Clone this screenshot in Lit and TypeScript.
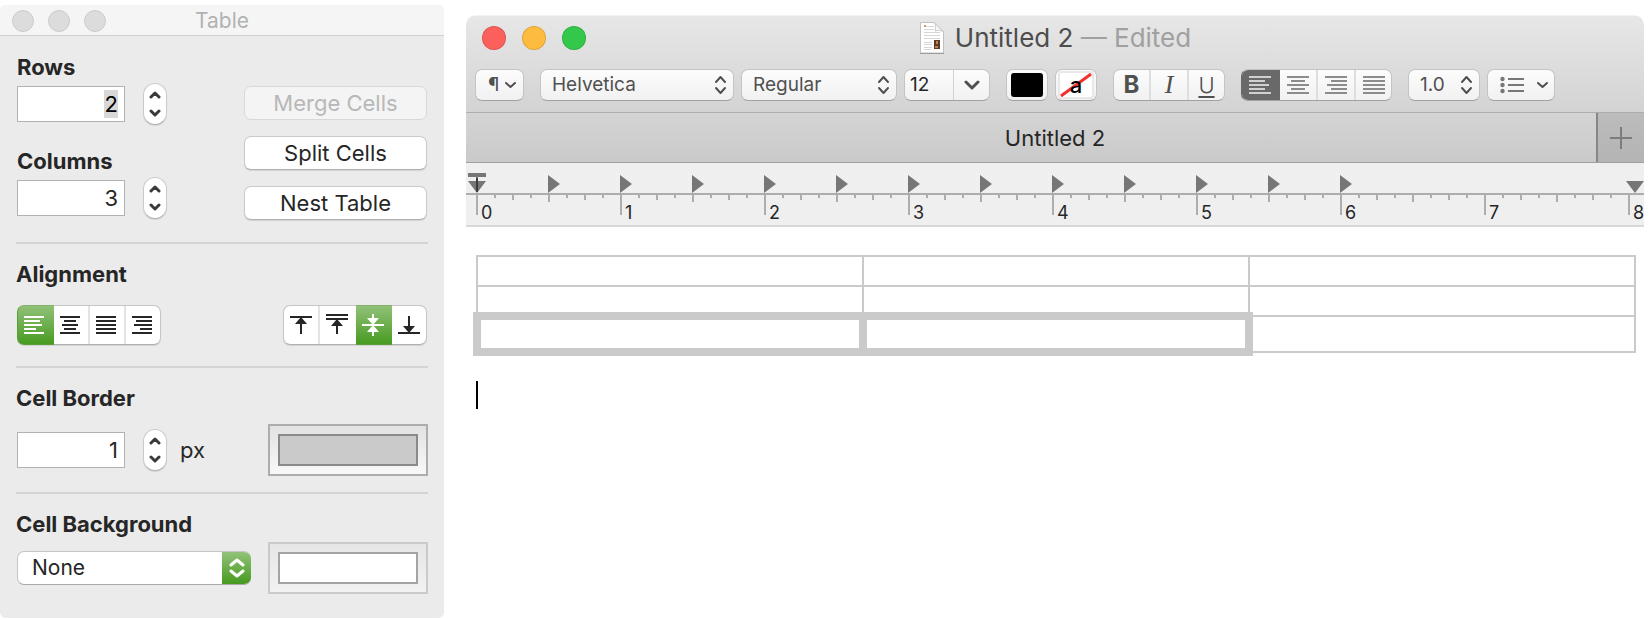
import { LitElement, html, css, svg } from "lit";
import { customElement, property } from "lit/decorators.js";

type Bar = [x: number, width: number];

/** Five stacked two-pixel bars, as used by every text alignment icon. */
const bars = (width: number, rows: Bar[]) => html`
  <svg width=${width} height="18" viewBox="0 0 ${width} 18" fill="currentColor" aria-hidden="true">
    ${rows.map(([x, w], i) => svg`<rect x=${x} y=${i * 4} width=${w} height="2"></rect>`)}
  </svg>
`;

const upDown = (size: number, stroke: number) => html`
  <svg class="updown" width=${size} height="20" viewBox="0 0 ${size} 20" fill="none"
    stroke="currentColor" stroke-width=${stroke} stroke-linecap="round" stroke-linejoin="round" aria-hidden="true">
    <path d="M2 7 L${size / 2} 2 L${size - 2} 7 M2 13 L${size / 2} 18 L${size - 2} 13"></path>
  </svg>
`;

const chevron = (up: boolean, width = 12, stroke = 3) => html`
  <svg width=${width} height="8" viewBox="0 0 ${width} 8" fill="none" stroke="currentColor"
    stroke-width=${stroke} stroke-linecap="round" stroke-linejoin="round" aria-hidden="true">
    <path d=${up ? `M2 6 L${width / 2} 2 L${width - 2} 6` : `M2 2 L${width / 2} 6 L${width - 2} 2`}></path>
  </svg>
`;

const base = css`
  * { box-sizing: border-box; }
  :host {
    font-family: Inter, "Liberation Sans", sans-serif;
    font-size: 22px;
    line-height: 24px;
    color: #262626;
  }
  button, input, select {
    font: inherit;
    color: inherit;
    margin: 0;
    padding: 0;
    border: 0;
    background: none;
    appearance: none;
    outline-offset: 1px;
  }
  svg { display: block; flex: none; }
`;

@customElement("number-stepper")
class NumberStepper extends LitElement {
  @property() label = "";
  @property({ type: Number }) value = 0;
  @property({ type: Boolean }) marked = false;

  static styles = [base, css`
    :host { display: flex; align-items: center; gap: 18px; }
    input {
      width: 108px;
      height: 36px;
      padding: 0 6px;
      text-align: right;
      background: #fff;
      border: 1px solid #b2b2b2;
      line-height: 28px;
    }
    .marked {
      color: #000;
      background: linear-gradient(#d8d8d8, #d8d8d8) right 6px center / 14px 28px no-repeat #fff;
    }
    .step {
      display: flex;
      flex-direction: column;
      width: 24px;
      height: 42px;
      border: 1px solid #cbcbcb;
      border-bottom-color: #b0b0b0;
      border-radius: 12px;
      background: #fff;
      box-shadow: 0 1px 1px #0000001a;
      color: #3a3a3a;
    }
    .step button { flex: 1; display: flex; justify-content: center; }
    .up { align-items: flex-end; padding-bottom: 5px; }
    .down { align-items: flex-start; padding-top: 5px; }
  `];

  private change(by: number) {
    this.value = Math.max(1, this.value + by);
  }

  render() {
    return html`
      <input type="text" inputmode="numeric" aria-label=${this.label}
        class=${this.marked ? "marked" : ""} .value=${String(this.value)} />
      <div class="step">
        <button class="up" aria-label="Increase" @click=${() => this.change(1)}>${chevron(true)}</button>
        <button class="down" aria-label="Decrease" @click=${() => this.change(-1)}>${chevron(false)}</button>
      </div>
    `;
  }
}

@customElement("table-panel")
class TablePanel extends LitElement {
  static styles = [base, css`
    :host {
      display: block;
      background: #ebebeb;
      border-radius: 6px;
      overflow: hidden;
    }
    header {
      display: grid;
      grid-template-columns: 1fr auto 1fr;
      align-items: center;
      height: 31px;
      padding: 1px 12px 0;
      background: #f5f5f5;
      border-bottom: 1px solid #d0d0d0;
      color: #b2b2b2;
    }
    .lights { display: flex; gap: 14px; }
    .light {
      width: 22px;
      height: 22px;
      border-radius: 50%;
      background: #dcdcdc;
      border: 1px solid #cbcbcb;
    }
    h1, h2 { margin: 0; font-size: 22px; line-height: 24px; }
    h1 { font-size: 21px; font-weight: 400; }
    h2 { font-weight: 700; }
    .body { padding: 1px 16px 8px; }
    section {
      display: flex;
      flex-direction: column;
      padding: 18px 0 16px;
      border-bottom: 2px solid #d4d4d4;
    }
    section:last-child { border-bottom: 0; }
    .row, .dims { padding-left: 1px; }
    .dims { display: flex; justify-content: space-between; align-items: flex-end; padding-bottom: 6px; }
    .fields { display: flex; flex-direction: column; gap: 24px; padding-bottom: 1px; }
    .field { display: flex; flex-direction: column; gap: 4px; }
    .actions { display: flex; flex-direction: column; gap: 16px; padding-right: 1px; }
    .push {
      width: 183px;
      height: 34px;
      border-radius: 7px;
      border: 1px solid #cacaca;
      border-bottom-color: #b0b0b0;
      background: #fff;
      box-shadow: 0 1px 1px #0000001a;
    }
    .push:disabled { background: #f4f4f4; color: #b8b8b8; border-color: #d8d8d8; box-shadow: none; }
    .row { display: flex; align-items: center; justify-content: space-between; }
    .aligns { padding: 19px 1px 5px; }
    .border { padding-top: 14px; }
    .background { padding-top: 6px; }
    .unit { display: flex; align-items: center; gap: 13px; }
    .seg {
      display: grid;
      grid-template-columns: 37px 36px 36px 35px;
      height: 40px;
      border-radius: 7px;
      box-shadow: 0 1px 1px #0000001a;
    }
    .seg button {
      display: flex;
      align-items: center;
      padding-left: 6px;
      background: #fff;
      border: solid #c6c6c6;
      border-width: 1px 0;
      border-bottom-color: #b0b0b0;
      background-clip: padding-box;
      box-shadow: inset -2px 0 #e4e4e4;
    }
    .seg button:first-child { border-left-width: 1px; border-radius: 7px 0 0 7px; }
    .seg button:last-child { border-right-width: 1px; border-radius: 0 7px 7px 0; box-shadow: none; }
    .seg button[aria-pressed="true"] {
      color: #fff;
      background: linear-gradient(#93c27a, #459a1f) border-box;
      border-color: #5a9e3a;
      border-top-color: #86b36c;
      box-shadow: none;
    }
    .seg button:has(+ [aria-pressed="true"]) { box-shadow: none; }
    .well {
      display: flex;
      width: 160px;
      height: 52px;
      padding: 8px;
      border: 2px solid #adadad;
      background: linear-gradient(#e2e2e2, #f8f8f8);
    }
    .swatch { flex: 1; border: 2px solid #8a8a8a; background: #cacaca; }
    .pale { border-color: #cacaca; background: linear-gradient(#e6e6e6, #f2f2f2); }
    .pale .swatch { border-color: #a4a4a4; background: #fff; }
    .popup {
      display: grid;
      grid-template-columns: 1fr 29px;
      width: 234px;
      height: 34px;
      border-radius: 7px;
      overflow: hidden;
      background: #fff;
      border: 1px solid #c6c6c6;
      border-right: 0;
      border-bottom-color: #a8a8a8;
    }
    .popup select { grid-area: 1 / 1 / 2 / 3; padding-left: 14px; font-size: 21px; }
    .cap {
      grid-area: 1 / 2;
      display: grid;
      place-items: center;
      color: #fff;
      pointer-events: none;
      background: linear-gradient(#93c27a, #459a1f);
    }
  `];

  private horizontal = [
    { name: "Align left", rows: [[0, 20], [0, 16], [0, 18], [0, 12], [0, 20]] as Bar[] },
    { name: "Align center", rows: [[0, 20], [4, 12], [2, 16], [4, 12], [0, 20]] as Bar[] },
    { name: "Justify", rows: [[0, 20], [0, 20], [0, 20], [0, 20], [0, 20]] as Bar[] },
    { name: "Align right", rows: [[0, 20], [4, 16], [2, 18], [8, 12], [0, 20]] as Bar[] },
  ];

  private vertical = [
    { name: "Align top", d: "M0 3h22v2H0z M10 5h2v16h-2z M11 4l6 7H5z" },
    { name: "Align first baseline", d: "M0 1h22v2H0z M0 5h22v2H0z M10 7h2v14h-2z M11 6l6 7H5z" },
    { name: "Align middle", d: "M0 11h22v2H0z M10 1h2v22h-2z M5 5h12l-6 7z M11 12l6 7H5z" },
    { name: "Align bottom", d: "M0 19h22v2H0z M10 3h2v16h-2z M5 13h12l-6 7z" },
  ];

  render() {
    return html`
      <header>
        <div class="lights"><span class="light"></span><span class="light"></span><span class="light"></span></div>
        <h1>Table</h1>
      </header>
      <div class="body">
        <section>
          <div class="dims">
            <div class="fields">
              <div class="field"><h2>Rows</h2><number-stepper label="Rows" .value=${2} marked></number-stepper></div>
              <div class="field"><h2>Columns</h2><number-stepper label="Columns" .value=${3}></number-stepper></div>
            </div>
            <div class="actions">
              <button class="push" disabled>Merge Cells</button>
              <button class="push">Split Cells</button>
              <button class="push">Nest Table</button>
            </div>
          </div>
        </section>
        <section>
          <h2>Alignment</h2>
          <div class="row aligns">
            <div class="seg" role="group" aria-label="Horizontal alignment">
              ${this.horizontal.map((o, i) => html`
                <button aria-label=${o.name} aria-pressed=${i === 0}>${bars(20, o.rows)}</button>`)}
            </div>
            <div class="seg" role="group" aria-label="Vertical alignment">
              ${this.vertical.map((o, i) => html`
                <button aria-label=${o.name} aria-pressed=${i === 2}>
                  <svg width="22" height="24" viewBox="0 0 22 24" fill="currentColor"><path d=${o.d}></path></svg>
                </button>`)}
            </div>
          </div>
        </section>
        <section>
          <h2>Cell Border</h2>
          <div class="row border">
            <div class="unit"><number-stepper label="Cell border" .value=${1}></number-stepper><span>px</span></div>
            <button class="well" aria-label="Border color"><span class="swatch"></span></button>
          </div>
        </section>
        <section>
          <h2 id="cell-background">Cell Background</h2>
          <div class="row background">
            <div class="popup">
              <select aria-labelledby="cell-background"><option>None</option></select>
              <span class="cap">${upDown(16, 3)}</span>
            </div>
            <button class="well pale" aria-label="Background color"><span class="swatch"></span></button>
          </div>
        </section>
      </div>
    `;
  }
}

@customElement("editor-toolbar")
class EditorToolbar extends LitElement {
  static styles = [base, css`
    :host {
      display: flex;
      gap: 16px;
      padding: 0 9px;
      font-size: 19px;
      color: #505050;
    }
    .group { display: flex; gap: 7px; }
    .box {
      display: flex;
      align-items: center;
      height: 32px;
      border: 1px solid #c4c4c4;
      border-bottom-color: #a2a2a2;
      border-radius: 7px;
      background: linear-gradient(#fcfcfc, #f1f1f1);
    }
    .para { width: 49px; gap: 5px; padding-left: 12px; }
    .pop { display: grid; grid-template-columns: 1fr 26px; align-items: center; }
    .pop select { grid-area: 1 / 1 / 2 / 3; height: 30px; padding-left: 11px; }
    .pop .updown { grid-area: 1 / 2; justify-self: center; pointer-events: none; }
    .family { width: 194px; }
    .style { width: 156px; }
    .spacing { width: 72px; }
    .size { width: 86px; color: #262626; }
    .size input { width: 48px; padding-left: 5px; }
    .size button {
      flex: 1;
      height: 30px;
      display: grid;
      place-items: center;
      border-left: 1px solid #d2d2d2;
      color: #505050;
    }
    .color { width: 42px; justify-content: center; color: #000; }
    .ink { width: 32px; height: 24px; border-radius: 3px; background: #000; }
    .highlight {
      display: grid;
      place-items: center;
      width: 36px;
      height: 28px;
      background: #fff;
      border: 2px solid #e8e8e8;
      border-radius: 4px;
      font-weight: 500;
      font-size: 22px;
      line-height: 22px;
    }
    .highlight > * { grid-area: 1 / 1; }
    .box.seg { display: grid; grid-auto-flow: column; overflow: hidden; }
    .faces { grid-template-columns: 37px 38px 1fr; width: 112px; }
    .aligns { grid-template-columns: 38px 38px 38px 1fr; width: 151px; color: #8c8c8c; }
    .seg button {
      display: grid;
      place-items: center;
      height: 30px;
      border-right: 2px solid #dedede;
    }
    .seg button:last-child { border-right: 0; }
    .seg button[aria-pressed="true"] { background: #696969; border-color: #696969; color: #d0d0d0; }
    .aligns:has(button:first-child[aria-pressed="true"]) { border-left-color: #696969; }
    .bold { font-size: 24px; font-weight: 700; }
    .italic { font-family: "Liberation Serif", serif; font-style: italic; font-size: 26px; }
    .under { font-size: 22px; font-weight: 300; text-decoration: underline; text-underline-offset: 3px; text-decoration-thickness: 2px; }
    .list { width: 68px; gap: 12px; padding-left: 12px; }
  `];

  private aligns = [
    { name: "Align left", rows: [[0, 22], [0, 16], [0, 20], [0, 16], [0, 22]] as Bar[] },
    { name: "Align center", rows: [[0, 22], [4, 14], [0, 22], [4, 14], [0, 22]] as Bar[] },
    { name: "Align right", rows: [[0, 22], [6, 16], [2, 20], [6, 16], [0, 22]] as Bar[] },
    { name: "Justify", rows: [[0, 22], [0, 22], [0, 22], [0, 22], [0, 22]] as Bar[] },
  ];

  render() {
    return html`
      <button class="box para" aria-label="Paragraph styles"><span>¶</span>${chevron(false, 13, 2)}</button>
      <div class="group">
        <div class="box pop family">
          <select aria-label="Font family"><option>Helvetica</option></select>${upDown(13, 2)}
        </div>
        <div class="box pop style">
          <select aria-label="Typeface"><option>Regular</option></select>${upDown(13, 2)}
        </div>
        <div class="box size">
          <input type="text" aria-label="Font size" value="12" />
          <button aria-label="Choose font size">
            <svg width="16" height="10" viewBox="0 0 16 10" fill="none" stroke="currentColor" stroke-width="3"
              stroke-linecap="round" stroke-linejoin="round"><path d="M2 2 L8 8 L14 2"></path></svg>
          </button>
        </div>
      </div>
      <div class="group">
        <button class="box color" aria-label="Text color"><span class="ink"></span></button>
        <button class="box color" aria-label="Text background color">
          <span class="highlight">
            <svg width="32" height="24" viewBox="0 0 32 24" fill="none" stroke="#f5302c" stroke-width="3"><path d="M1 23 L31 1"></path></svg>
            <span>a</span>
          </span>
        </button>
      </div>
      <div class="box seg faces" role="group" aria-label="Typeface">
        <button class="bold" aria-label="Bold">B</button>
        <button class="italic" aria-label="Italic">I</button>
        <button class="under" aria-label="Underline">U</button>
      </div>
      <div class="box seg aligns" role="group" aria-label="Text alignment">
        ${this.aligns.map((o, i) => html`
          <button aria-label=${o.name} aria-pressed=${i === 0}>${bars(22, o.rows)}</button>`)}
      </div>
      <div class="group">
        <div class="box pop spacing">
          <select aria-label="Line spacing"><option>1.0</option></select>${upDown(13, 2)}
        </div>
        <button class="box list" aria-label="List style">
          <svg width="24" height="18" viewBox="0 0 24 18" fill="#777">
            <circle cx="2.5" cy="3" r="2.2"></circle><circle cx="2.5" cy="9" r="2.2"></circle><circle cx="2.5" cy="15" r="2.2"></circle>
            <path d="M8 2h16v2H8z M8 8h16v2H8z M8 14h16v2H8z"></path>
          </svg>
          ${chevron(false, 13, 2)}
        </button>
      </div>
    `;
  }
}

@customElement("editor-ruler")
class EditorRuler extends LitElement {
  static styles = [base, css`
    :host {
      display: block;
      overflow: hidden;
      padding-left: 10px;
      background: #efefef;
      border-bottom: 2px solid #d8d8d8;
      font-size: 18px;
      line-height: 20px;
    }
    .strip { position: relative; height: 62px; }
    .stops { display: flex; height: 30px; align-items: flex-end; }
    .stops svg { width: 72px; color: #767676; }
    .scale { display: flex; border-top: 2px solid #adadad; margin-left: -10px; padding-left: 10px; }
    .inch { display: flex; flex: none; width: 144px; }
    .inch span { margin-left: -139px; padding-top: 8px; }
    .indent { position: absolute; top: 10px; color: #767676; }
    .left { left: -8px; }
    .right { right: 0; }
  `];

  render() {
    const inches = [0, 1, 2, 3, 4, 5, 6, 7, 8];
    return html`
      <div class="strip">
        <div class="stops">
          ${[...Array(13).keys()].map(i => html`
            <svg width="72" height="18" viewBox="0 0 72 18" fill="currentColor">
              ${i ? svg`<path d="M0 0 L12 9 L0 18 z"></path>` : ""}
            </svg>`)}
        </div>
        <div class="scale">
          ${inches.map(n => html`
            <div class="inch">
              <svg width="144" height="24" viewBox="0 0 144 24" fill="#adadad">
                <path d="M0 0h2v20h-2z M18 0h2v3h-2z M36 0h2v5h-2z M54 0h2v3h-2z M72 0h2v7h-2z M90 0h2v3h-2z M108 0h2v5h-2z M126 0h2v3h-2z"></path>
              </svg>
              <span>${n}</span>
            </div>`)}
        </div>
        <svg class="indent left" width="18" height="20" viewBox="0 0 18 20" fill="currentColor">
          <path d="M0 0h18v4H0z M8 4h2v5h-2z M0 8h18L9 20z"></path>
          <path d="M8 5h2v14h-2z" fill="#3c3c3c"></path>
        </svg>
        <svg class="indent right" width="18" height="20" viewBox="0 0 18 20" fill="currentColor">
          <path d="M0 8h18L9 20z"></path>
        </svg>
      </div>
    `;
  }
}

@customElement("editor-window")
class EditorWindow extends LitElement {
  static styles = [base, css`
    :host {
      display: flex;
      flex-direction: column;
      min-width: 0;
      background: #fff;
      border-radius: 10px 10px 0 0;
      overflow: hidden;
    }
    header {
      height: 98px;
      background: linear-gradient(#e7e7e7, #d3d3d3);
      border-top: 1px solid #f2f2f2;
      border-bottom: 1px solid #adadad;
    }
    .title {
      display: grid;
      grid-template-columns: 1fr auto 1fr;
      align-items: center;
      height: 53px;
      padding: 0 16px 9px;
    }
    .lights { display: flex; gap: 16px; }
    .light { width: 24px; height: 24px; border-radius: 50%; border: 1px solid #0000001f; }
    .close { background: #fc605c; }
    .min { background: #fdbc40; }
    .zoom { background: #34c84a; }
    h1 {
      display: flex;
      align-items: center;
      gap: 10px;
      margin: 0;
      font-size: 26px;
      line-height: 30px;
      font-weight: 400;
      color: #4d4d4d;
    }
    .state { color: #a0a0a0; }
    .tabs {
      display: flex;
      height: 50px;
      background: linear-gradient(#d4d4d4, #cacaca);
      border-bottom: 1px solid #a0a0a0;
    }
    .tab { flex: 1; padding-left: 48px; }
    .add {
      display: grid;
      place-items: center;
      width: 48px;
      border-left: 2px solid #868686;
      background: linear-gradient(#bcbcbc, #b4b4b4);
      color: #7c7c7c;
    }
    main { flex: 1; padding: 28px 8px 24px 10px; }
    table { width: calc(100% + 3px); margin-left: -3px; table-layout: fixed; border-collapse: collapse; }
    td { height: 30px; padding: 0; border: 2px solid #cacaca; }
    .picked td { height: 36px; }
    td.selected { border-width: 8px; }
    .caret { width: 2px; height: 28px; margin-top: 25px; background: #000; }
  `];

  render() {
    return html`
      <header>
        <div class="title">
          <div class="lights"><span class="light close"></span><span class="light min"></span><span class="light zoom"></span></div>
          <h1>
            <svg width="26" height="32" viewBox="0 0 26 32" fill="none" aria-hidden="true">
              <path d="M1.5 .5H15L24.5 10V31H1.5z" fill="#fff" stroke="#c0c0c0"></path>
              <path d="M1 31.5H25" stroke="#9c9c9c"></path>
              <path d="M15 .5C17 3 17 6 16 9C19 8 22 8 24.5 10z" fill="#fafafa" stroke="#c8c8c8"></path>
              <path d="M5 3h2v2h-2z" fill="#e0965a"></path>
              <path d="M7 4.5h8 M5 7.5h10 M5 10.5h16 M5 13.5h16 M5 16.5h16 M5 20.5h8 M5 22.5h8 M5 25.5h8 M5 27.5h7" stroke="#d6d6d6"></path>
              <path d="M15 18h6v9h-6z" fill="#5c3d22"></path>
              <path d="M17 19h2v3h-2z M16 24h3v2h-3z" fill="#b8865a"></path>
            </svg>
            <span>Untitled 2 <span class="state">— Edited</span></span>
          </h1>
        </div>
        <editor-toolbar></editor-toolbar>
      </header>
      <div class="tabs">
        <button class="tab">Untitled 2</button>
        <button class="add" aria-label="New tab">
          <svg width="22" height="22" viewBox="0 0 22 22" fill="currentColor"><path d="M10 0h2v22h-2z M0 10h22v2H0z"></path></svg>
        </button>
      </div>
      <editor-ruler></editor-ruler>
      <main>
        <table>
          <tbody>
            <tr><td></td><td></td><td></td></tr>
            <tr><td></td><td></td><td></td></tr>
            <tr class="picked"><td class="selected"></td><td class="selected"></td><td></td></tr>
          </tbody>
        </table>
        <div class="caret"></div>
      </main>
    `;
  }
}

@customElement("app-root")
class AppRoot extends LitElement {
  static styles = css`
    :host {
      box-sizing: border-box;
      display: grid;
      grid-template-columns: 444px minmax(0, 1fr);
      gap: 22px;
      align-items: start;
      min-height: 100vh;
      padding: 5px 6px 0 0;
      background: #fff;
    }
    editor-window { margin-top: 10px; }
  `;

  render() {
    return html`<table-panel></table-panel><editor-window></editor-window>`;
  }
}
